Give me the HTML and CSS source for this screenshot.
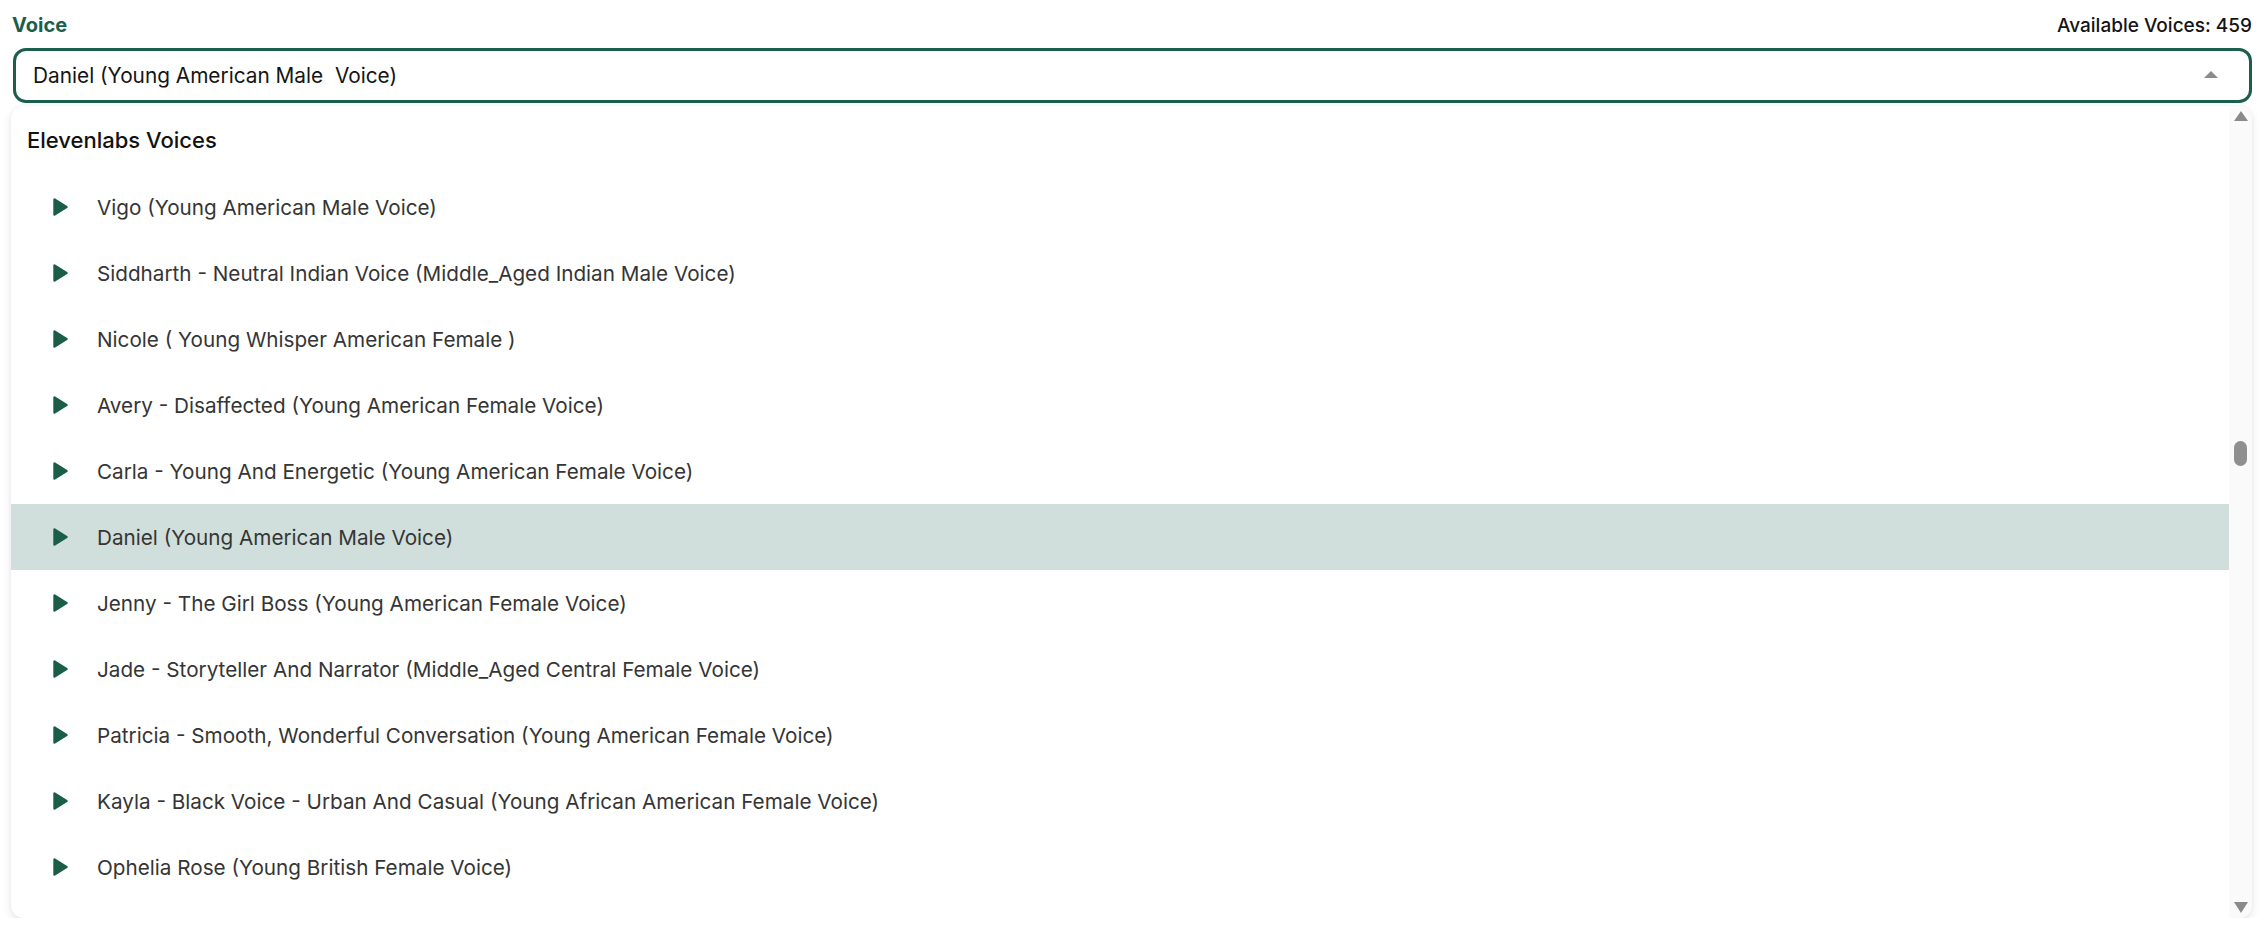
FILE: index.html
```html
<!DOCTYPE html>
<html lang="en">
<head>
<meta charset="utf-8">
<title>Voice select</title>
<link rel="stylesheet" href="styles.css">
</head>
<body>
<div class="field">
  <div class="field-head">
    <span class="label">Voice</span>
    <span class="count">Available Voices: 459</span>
  </div>
  <div class="select">
    <span class="select-value">Daniel (Young American Male&nbsp; Voice)</span>
    <span class="caret-up"></span>
  </div>
  <div class="panel">
    <div class="list">
      <div class="group-title">Elevenlabs Voices</div>
      <div class="option"><svg class="play" viewBox="0 0 15 18"><path d="M1.5 1.5 L13.5 9 L1.5 16.5 Z"/></svg><span class="name">Vigo (Young American Male Voice)</span></div>
      <div class="option"><svg class="play" viewBox="0 0 15 18"><path d="M1.5 1.5 L13.5 9 L1.5 16.5 Z"/></svg><span class="name">Siddharth - Neutral Indian Voice (Middle_Aged Indian Male Voice)</span></div>
      <div class="option"><svg class="play" viewBox="0 0 15 18"><path d="M1.5 1.5 L13.5 9 L1.5 16.5 Z"/></svg><span class="name">Nicole ( Young Whisper American Female )</span></div>
      <div class="option"><svg class="play" viewBox="0 0 15 18"><path d="M1.5 1.5 L13.5 9 L1.5 16.5 Z"/></svg><span class="name">Avery - Disaffected (Young American Female Voice)</span></div>
      <div class="option"><svg class="play" viewBox="0 0 15 18"><path d="M1.5 1.5 L13.5 9 L1.5 16.5 Z"/></svg><span class="name">Carla - Young And Energetic (Young American Female Voice)</span></div>
      <div class="option selected"><svg class="play" viewBox="0 0 15 18"><path d="M1.5 1.5 L13.5 9 L1.5 16.5 Z"/></svg><span class="name">Daniel (Young American Male Voice)</span></div>
      <div class="option"><svg class="play" viewBox="0 0 15 18"><path d="M1.5 1.5 L13.5 9 L1.5 16.5 Z"/></svg><span class="name">Jenny - The Girl Boss (Young American Female Voice)</span></div>
      <div class="option"><svg class="play" viewBox="0 0 15 18"><path d="M1.5 1.5 L13.5 9 L1.5 16.5 Z"/></svg><span class="name">Jade - Storyteller And Narrator (Middle_Aged Central Female Voice)</span></div>
      <div class="option"><svg class="play" viewBox="0 0 15 18"><path d="M1.5 1.5 L13.5 9 L1.5 16.5 Z"/></svg><span class="name">Patricia - Smooth, Wonderful Conversation (Young American Female Voice)</span></div>
      <div class="option"><svg class="play" viewBox="0 0 15 18"><path d="M1.5 1.5 L13.5 9 L1.5 16.5 Z"/></svg><span class="name">Kayla - Black Voice - Urban And Casual (Young African American Female Voice)</span></div>
      <div class="option"><svg class="play" viewBox="0 0 15 18"><path d="M1.5 1.5 L13.5 9 L1.5 16.5 Z"/></svg><span class="name">Ophelia Rose (Young British Female Voice)</span></div>
    </div>
    <div class="scrollbar">
      <span class="sb-arrow up"></span>
      <div class="sb-track"><span class="sb-thumb" style="margin-top: 320px"></span></div>
      <span class="sb-arrow down"></span>
    </div>
  </div>
</div>
</body>
</html>
```

FILE: styles.css
```css
* { box-sizing: border-box; }
html, body { margin: 0; padding: 0; background: #ffffff; }
body {
  font-family: Inter, "Liberation Sans", Arial, sans-serif;
  color: #1c1c1c;
}
.field {
  padding: 0 15px 0 11px;
}
.field-head {
  display: flex;
  justify-content: space-between;
  align-items: center;
  height: 48px;
  padding: 2px 0 0 1px;
}
.label {
  font-size: 20px;
  font-weight: 700;
  color: #1b5e4b;
}
.count {
  font-size: 19px;
  font-weight: 500;
  color: #141414;
}
.select {
  margin-left: 2px;
  height: 55px;
  border: 3px solid #1b5e4b;
  border-radius: 13px;
  display: flex;
  align-items: center;
  justify-content: space-between;
  padding: 0 31px 0 17px;
}
.select-value {
  font-size: 20.8px;
  color: #151515;
  white-space: pre;
}
.caret-up {
  width: 0;
  height: 0;
  border-left: 7px solid transparent;
  border-right: 7px solid transparent;
  border-bottom: 7px solid #8a8a8a;
  margin-top: -2px;
}
.panel {
  margin-top: 3px;
  height: 812px;
  display: flex;
  border-radius: 13px;
  background: #fff;
  box-shadow: 0 4px 10px rgba(40, 40, 90, 0.10), 0 0 4px rgba(40, 40, 90, 0.05);
  overflow: hidden;
}
.list {
  flex: 1;
  display: flex;
  flex-direction: column;
}
.group-title {
  height: 68px;
  display: flex;
  align-items: center;
  padding-left: 16px;
  font-size: 22px;
  font-weight: 500;
  color: #121212;
}
.option {
  height: 66px;
  display: flex;
  align-items: center;
  padding-left: 42px;
}
.option.selected {
  background: #d0dfdb;
}
.play {
  width: 15px;
  height: 18px;
  flex: none;
  margin-right: 29px;
  fill: #1a5e48;
  stroke: #1a5e48;
  stroke-width: 2.4;
  stroke-linejoin: round;
}
.name {
  font-size: 20.7px;
  color: #353535;
}
.scrollbar {
  width: 23px;
  flex: none;
  background: #fafafa;
  display: flex;
  flex-direction: column;
  align-items: center;
  padding: 5px 0 5px;
}
.sb-arrow {
  width: 0;
  height: 0;
  border-left: 7.5px solid transparent;
  border-right: 7.5px solid transparent;
  flex: none;
}
.sb-arrow.up { border-bottom: 10px solid #8a8a8a; }
.sb-arrow.down { border-top: 11px solid #8a8a8a; }
.sb-track {
  flex: 1;
  width: 100%;
  display: flex;
  flex-direction: column;
  align-items: center;
}
.sb-thumb {
  width: 13px;
  height: 25px;
  border-radius: 7px;
  background: #8f8f8f;
}
```
